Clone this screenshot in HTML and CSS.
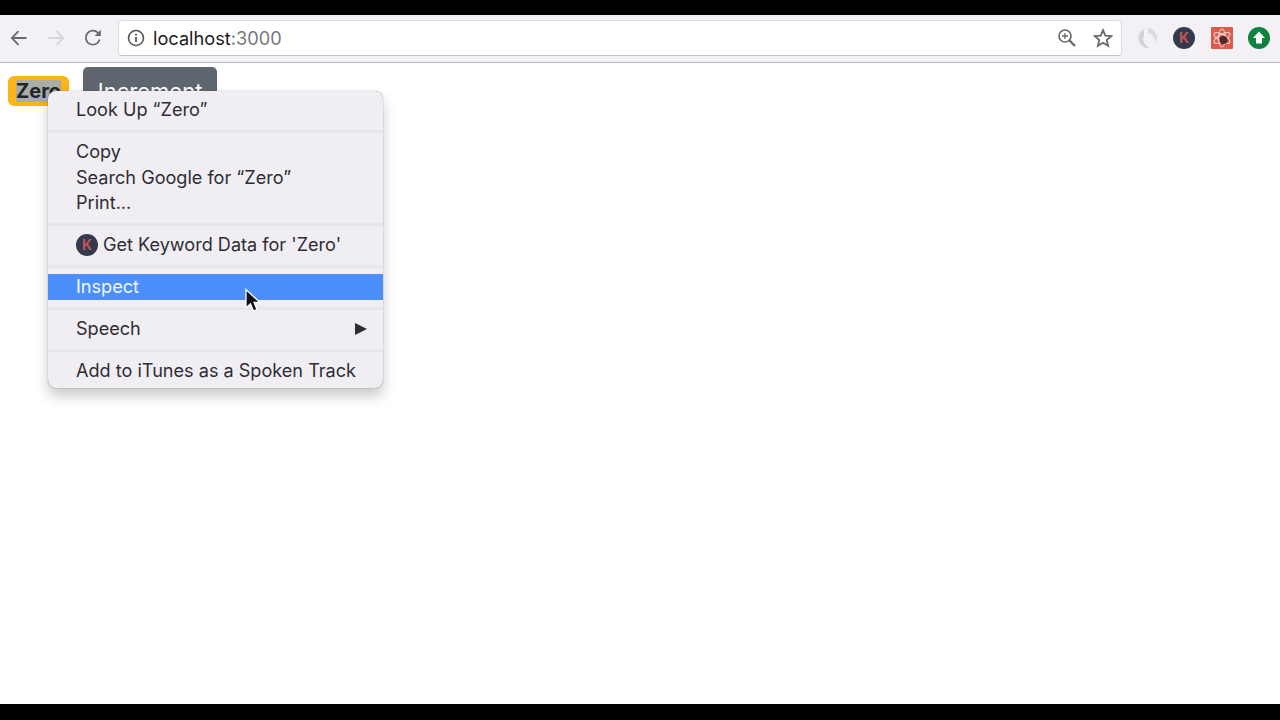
FILE: index.html
```html
<!DOCTYPE html>
<html lang="en">
<head>
    <meta charset="UTF-8">
    <meta name="viewport" content="width=device-width, initial-scale=1.0">
    <title>localhost:3000</title>
    <link rel="stylesheet" href="styles.css">
</head>
<body>
    <div class="letterbox-top"></div>
    <header class="toolbar">
        <div class="nav-buttons">
            <svg class="nav-icon" viewBox="0 0 20 20"><path d="M17.5 10H3M9.5 3.2 2.8 10l6.700 6.800" fill="none" stroke="#6a6a6e" stroke-width="1.800"/></svg>
            <svg class="nav-icon" viewBox="0 0 20 20"><path d="M2.500 10H17M10.500 3.200 17.200 10l-6.700 6.800" fill="none" stroke="#d6d5d9" stroke-width="1.800"/></svg>
            <svg class="nav-icon" viewBox="0 0 20 20"><path d="M16.600 11.500A7 7 0 1 1 14.800 4.700L17 7" fill="none" stroke="#6a6a6e" stroke-width="1.800"/><path d="M17.800 1.800V8H11.600Z" fill="#6a6a6e"/></svg>
        </div>
        <div class="omnibox">
            <svg class="info-icon" viewBox="0 0 18 18"><circle cx="9" cy="9" r="7.500" fill="none" stroke="#55555a" stroke-width="1.600"/><path d="M9 8v5M9 4.800v1.800" stroke="#55555a" stroke-width="1.800"/></svg>
            <span class="url">localhost<span class="url-port">:3000</span></span>
            <svg class="omni-icon zoom-icon" viewBox="0 0 20 20"><circle cx="8" cy="8" r="6" fill="none" stroke="#6a6a6e" stroke-width="1.700"/><path d="M12.500 12.500 18 18" stroke="#6a6a6e" stroke-width="2.400"/><path d="M5 8h6M8 5v6" stroke="#6a6a6e" stroke-width="1.300"/></svg>
            <svg class="omni-icon" viewBox="0 0 20 20"><path d="M10 2.200 12.300 7.600 18.200 8.100 13.700 12 15.100 17.800 10 14.700 4.900 17.800 6.300 12 1.800 8.100 7.700 7.600Z" fill="none" stroke="#6a6a6e" stroke-width="1.800"/></svg>
        </div>
        <div class="extensions">
            <svg class="ext-icon" viewBox="0 0 22 22"><path d="M12 1A10 10 0 0 1 19 17C20 11 17 7 12 6Z" fill="#dcdbdf"/><path d="M8 2A10 10 0 0 0 13 21C9 18 6 14 8 9Z" fill="#d4d3d7"/><circle cx="11" cy="11" r="3.500" fill="#f3f1f5"/></svg>
            <span class="ext-k">K</span>
            <svg class="ext-icon" viewBox="0 0 22 22"><rect width="22" height="22" rx="1" fill="#dc5a4e"/><g fill="none" stroke="#f4d9d4" stroke-width="1"><ellipse cx="11" cy="11" rx="9" ry="3.500" transform="rotate(30 11 11)"/><ellipse cx="11" cy="11" rx="9" ry="3.500" transform="rotate(90 11 11)"/><ellipse cx="11" cy="11" rx="9" ry="3.500" transform="rotate(150 11 11)"/></g><circle cx="12.500" cy="13" r="4" fill="#4a2a2a"/></svg>
            <svg class="ext-icon" viewBox="0 0 22 22"><circle cx="11" cy="11" r="11" fill="#11813f"/><path d="M11 4.500 17 11H14V16.500H8V11H5Z" fill="#fff"/></svg>
        </div>
    </header>

    <main class="page">
        <span class="badge"><span class="selected-text">Zero</span></span>
        <button class="increment-btn">Increment</button>

        <div class="context-menu">
            <div class="menu-item">Look Up “Zero”</div>
            <div class="menu-sep"></div>
            <div class="menu-item">Copy</div>
            <div class="menu-item">Search Google for “Zero”</div>
            <div class="menu-item">Print...</div>
            <div class="menu-sep"></div>
            <div class="menu-item menu-item-icon"><span class="menu-k">K</span>Get Keyword Data for 'Zero'</div>
            <div class="menu-sep"></div>
            <div class="menu-item active">Inspect</div>
            <div class="menu-sep"></div>
            <div class="menu-item has-sub">Speech<span class="sub-arrow"></span></div>
            <div class="menu-sep"></div>
            <div class="menu-item">Add to iTunes as a Spoken Track</div>
        </div>

        <svg class="cursor" viewBox="0 0 18 26"><path d="M2 1.500V20L6.500 15.800 9.500 23 13 21.500 10 14.500H16Z" fill="#111" stroke="#fff" stroke-width="1.300"/></svg>
    </main>
    <div class="letterbox-bottom"></div>
</body>
</html>
```

FILE: styles.css
```css
html, body {
    height: 100%;
}

body {
    margin: 0;
    padding: 0;
    display: flex;
    flex-direction: column;
    overflow: hidden;
    background: #fff;
    font-family: Inter, "Liberation Sans", sans-serif;
}

.letterbox-top {
    height: 15px;
    background: #000;
}

.letterbox-bottom {
    height: 16px;
    background: #000;
}

.toolbar {
    height: 46px;
    display: flex;
    align-items: center;
    padding: 0 10px 1px 9px;
    background: #f3f1f5;
    border-bottom: 1px solid #bdbbbf;
}

.nav-buttons {
    display: flex;
    gap: 17px;
    margin-right: 15px;
}

.nav-icon {
    width: 20px;
    height: 20px;
}

.omnibox {
    flex: 1;
    box-sizing: border-box;
    height: 36px;
    display: flex;
    align-items: center;
    padding: 0 8px 0 8px;
    background: #fff;
    border: 1px solid #dddbdf;
    border-bottom-color: #c4c2c6;
    border-radius: 4px;
}

.info-icon {
    width: 18px;
    height: 18px;
    margin-right: 8px;
}

.url {
    flex: 1;
    font-size: 18.200px;
    color: #1b1b1d;
}

.url-port {
    color: #77777b;
}

.omni-icon {
    width: 20px;
    height: 20px;
}

.zoom-icon {
    margin-right: 16px;
}

.extensions {
    display: flex;
    align-items: center;
    gap: 15.500px;
    margin-left: 13.500px;
}

.ext-icon {
    width: 22px;
    height: 22px;
}

.ext-k {
    width: 22px;
    height: 22px;
    border-radius: 50%;
    background: #323a4c;
    color: #c0545a;
    font-size: 14px;
    font-weight: 700;
    line-height: 22px;
    text-align: center;
}

.page {
    flex: 1;
    position: relative;
    display: flex;
    align-items: flex-start;
    gap: 14px;
    padding: 4px 0 0 8px;
}

.badge {
    margin-top: 9px;
    height: 30px;
    display: flex;
    align-items: center;
    padding: 0 8px;
    background: #fbb41a;
    border-radius: 6px;
    font-size: 20px;
    font-weight: 700;
    color: #212529;
}

.selected-text {
    background: #a9ada4;
    line-height: 22px;
}

.increment-btn {
    width: 134px;
    height: 48px;
    padding: 0;
    border: none;
    border-radius: 5px;
    background: #5f6670;
    color: #fff;
    font-family: inherit;
    font-size: 22px;
}

.context-menu {
    position: absolute;
    left: 48px;
    top: 28px;
    width: 335px;
    box-sizing: border-box;
    padding: 6px 0 4px;
    background: #f1eef3;
    border-radius: 8px;
    box-shadow: 0 0 1px rgba(0, 0, 0, 0.55), 0 8px 14px rgba(0, 0, 0, 0.22);
    font-size: 18.100px;
    color: #2f2d33;
}

.menu-item {
    height: 25.500px;
    line-height: 25.500px;
    padding: 0 16px 0 28px;
    display: flex;
    align-items: center;
    white-space: nowrap;
}

.menu-item.active {
    background: #4a8ffb;
    color: #f4f7fe;
}

.has-sub {
    justify-content: space-between;
}

.sub-arrow {
    width: 0;
    height: 0;
    border-left: 12px solid #2f2d33;
    border-top: 6px solid transparent;
    border-bottom: 6px solid transparent;
}

.menu-k {
    width: 22px;
    height: 22px;
    margin-right: 5px;
    border-radius: 50%;
    background: #323a4c;
    color: #c0545a;
    font-size: 14px;
    font-weight: 700;
    line-height: 22px;
    text-align: center;
}

.menu-sep {
    height: 3px;
    margin: 7px 0 6.500px;
    background: #e7e5e9;
}

.cursor {
    position: absolute;
    left: 244px;
    top: 225px;
    width: 18px;
    height: 26px;
}
```
